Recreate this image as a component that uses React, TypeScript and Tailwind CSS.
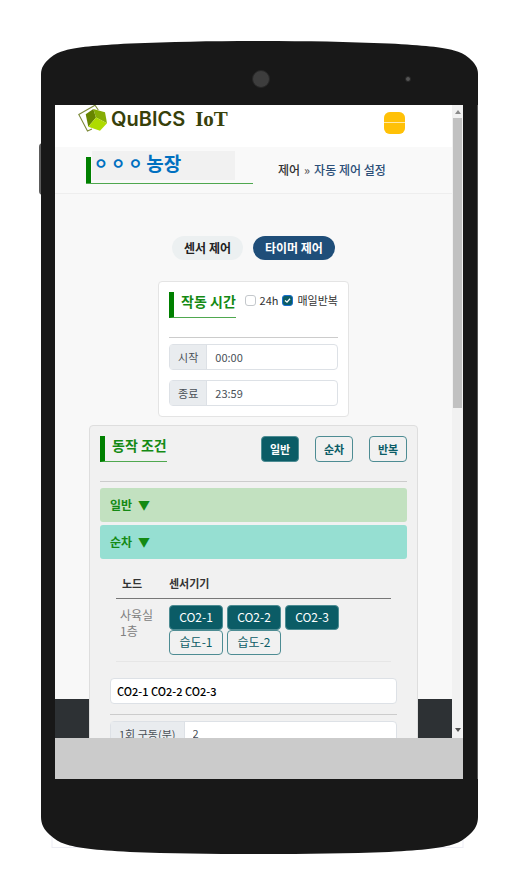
import React, { useState } from 'react';

const MODES = ['일반', '순차', '반복'];
const SENSORS = ['CO2-1', 'CO2-2', 'CO2-3', '습도-1', '습도-2'];

function PhoneTop() {
  return (
    <svg className="block h-16 w-full shrink-0" viewBox="0 0 437 64" preserveAspectRatio="none" aria-hidden="true">
      <path
        fill="#181818"
        d="M0 64V33C0 27 3 22 9 17C14 13 18 11 24 9.500C36 6 54 4.500 89 2.500C130 .8 170 0 218.500 0C267 0 307 .8 348 2.500C383 4.500 401 6 413 9.500C419 11 423 13 428 17C434 22 437 27 437 33V64Z"
      />
      <circle cx="220" cy="38" r="8.500" fill="#3d3d3d" stroke="#262626" />
      <circle cx="367" cy="38" r="2.500" fill="#555" stroke="#262626" />
    </svg>
  );
}

function PhoneBottom() {
  return (
    <svg className="block h-[75px] w-full shrink-0" viewBox="0 0 437 75" preserveAspectRatio="none" aria-hidden="true">
      <rect x="11" y="40" width="411" height="28.500" fill="none" stroke="#ededf5" />
      <path
        fill="#181818"
        d="M0 0V38C0 45 3 51 9 56C14 60.500 18 63 24 65C36 69 54 71 89 73C130 74.500 170 75 218.500 75C267 75 307 74.500 348 73C383 71 401 69 413 65C419 63 423 60.500 428 56C434 51 437 45 437 38V0Z"
      />
    </svg>
  );
}

function LogoMark() {
  return (
    <svg className="h-7 w-[30px] overflow-visible" viewBox="0 0 30 28" aria-hidden="true">
      <path d="M20.300 5L17 .2L.8 9.500L9.500 26L14 24" fill="none" stroke="#7d8a3a" strokeWidth="1.100" />
      <path d="M7.700 9.300L15.300 4L18 12.500L10.300 21.700Z" fill="#678500" />
      <path d="M15.300 4L27 7.300L29 18.300L18 12.500Z" fill="#86ad05" />
      <path d="M18 12.500L29 18.300L22 25.700L10.300 21.700Z" fill="#aedb00" />
    </svg>
  );
}

function Scrollbar() {
  return (
    <div className="flex w-[11px] shrink-0 flex-col items-center bg-[#f1f1f1]" aria-hidden="true">
      <div className="flex h-[13px] items-center">
        <svg className="h-1 w-1.5" viewBox="0 0 6 4">
          <path d="M0 4L3 0L6 4Z" fill="#8a8a8a" />
        </svg>
      </div>
      <div className="flex w-full flex-1 justify-center">
        <div className="h-[48%] w-[9px] bg-[#c1c1c1]" />
      </div>
      <div className="flex h-4 items-center">
        <svg className="h-1 w-1.5" viewBox="0 0 6 4">
          <path d="M0 0L3 4L6 0Z" fill="#505050" />
        </svg>
      </div>
    </div>
  );
}

function SectionTitle({ children }: { children: React.ReactNode }) {
  return (
    <h2 className="h-[26px] border-b border-l-[5px] border-b-[#4fa84f] border-l-[#008000] pl-[7px] text-sm leading-[18px] font-bold text-[#148a14]">
      {children}
    </h2>
  );
}

function InputGroup({ id, label, value }: { id: string; label: string; value: string }) {
  return (
    <div className="flex h-[26px] rounded-sm border border-[#dde1e6] bg-white text-[11px]">
      <label htmlFor={id} className="flex shrink-0 items-center border-r border-[#dde1e6] bg-[#e9ecef] px-2 leading-4 text-[#495057]">
        {label}
      </label>
      <input id={id} defaultValue={value} className="w-full min-w-0 px-2 text-[#495057] outline-none" />
    </div>
  );
}

export default function App() {
  const [tab, setTab] = useState('timer');
  const [mode, setMode] = useState('일반');
  const [allDay, setAllDay] = useState(false);
  const [daily, setDaily] = useState(true);
  const [selected, setSelected] = useState<string[]>(['CO2-1', 'CO2-2', 'CO2-3']);

  const toggleSensor = (name: string) => {
    setSelected((prev) => (prev.includes(name) ? prev.filter((s) => s !== name) : [...prev, name]));
  };

  const tabClass = (name: string) =>
    tab === name ? 'bg-[#1f4e79] text-white' : 'bg-[#ecf0f1] text-[#222]';

  const checkClass =
    'flex size-[11px] appearance-none items-center justify-center rounded-[3px] border border-[#c4c8cc] bg-white checked:border-[#1a6fd0] checked:bg-[#0b5c66]';

  return (
    <div className="flex h-screen flex-col bg-white px-10 pt-[41px] pb-[37px] font-['Noto_Sans_CJK_KR',sans-serif]">
      <div className="relative flex min-h-0 flex-1 flex-col pl-px">
        {/* 측면 버튼 */}
        <div className="absolute top-[102px] -left-px h-[52px] w-1 rounded-l-sm bg-[#5c5c5c]" />
        <PhoneTop />
        <div className="relative flex min-h-0 flex-1 flex-col border-r border-[#555] bg-[#181818] pr-3.5 pl-3.5">
          <div className="relative flex min-h-0 flex-1 overflow-hidden bg-[#f8f8f8]">
            {/* 푸터: 카드 뒤에 깔림 */}
            <footer className="absolute inset-x-0 bottom-0 h-[39px] bg-[#2d3134]" />

            <div className="relative min-w-0 flex-1">
              <header className="flex h-[42px] items-start justify-between bg-white pr-[47px] pl-[23px]">
                <a href="#" className="flex h-7 items-center text-[#37400a]">
                  <LogoMark />
                  <span className="ml-[3px] font-['Inter',sans-serif] text-xl leading-7 font-semibold">QuBICS</span>
                  <span className="ml-2.5 font-['Liberation_Serif',serif] text-[21px] leading-7 font-bold">IoT</span>
                </a>
                <button
                  type="button"
                  aria-label="메뉴"
                  className="mt-[7px] flex h-[22px] w-[21px] flex-col gap-px overflow-hidden rounded-md bg-[#ffe9a8]"
                >
                  <span className="h-2.5 w-full bg-[#ffc107]" />
                  <span className="w-full flex-1 bg-[#ffc107]" />
                </button>
              </header>

              <div className="flex h-[47px] items-center border-b border-[#eee] bg-[#f9f9f9] pl-[31px]">
                <div className="mb-1.5 h-[33px] w-[167px] border-b border-[#4fa84f]">
                  <div className="flex h-8 items-end">
                    <span className="h-[26px] w-[5px] bg-[#008000]" />
                    <h1 className="mb-[3px] ml-px flex h-[29px] w-[143px] gap-1 bg-[#f1f1f1] pl-0.5 leading-6 font-bold text-[#0070c0]">
                      <span className="text-[15px]">ㅇ ㅇ ㅇ</span>
                      <span className="text-[19px]">농장</span>
                    </h1>
                  </div>
                </div>
                <nav className="ml-[25px] flex gap-1 text-xs font-medium whitespace-nowrap">
                  <a href="#" className="text-[#333]">제어</a>
                  <span className="text-[#555]">»</span>
                  <a href="#" className="text-[#2c4f78]">자동 제어 설정</a>
                </nav>
              </div>

              <main className="flex flex-col items-center px-[34px] pt-[42px]">
                <div className="flex gap-2.5">
                  <button
                    type="button"
                    onClick={() => setTab('sensor')}
                    className={`h-6 rounded-full px-3 text-xs font-bold ${tabClass('sensor')}`}
                  >
                    센서 제어
                  </button>
                  <button
                    type="button"
                    onClick={() => setTab('timer')}
                    className={`h-6 rounded-full px-3 text-xs font-bold ${tabClass('timer')}`}
                  >
                    타이머 제어
                  </button>
                </div>

                <section className="mt-[21px] w-[58%] rounded-sm border border-[#e4e4e4] bg-white p-2.5">
                  <div className="flex justify-between">
                    <SectionTitle>작동 시간</SectionTitle>
                    <div className="flex h-4 items-center gap-1 text-[11px] whitespace-nowrap text-[#333]">
                      <input
                        id="all-day"
                        type="checkbox"
                        checked={allDay}
                        onChange={(e) => setAllDay(e.target.checked)}
                        className={checkClass}
                      />
                      <label htmlFor="all-day">24h</label>
                      <span className="grid place-items-center">
                        <input
                          id="daily"
                          type="checkbox"
                          checked={daily}
                          onChange={(e) => setDaily(e.target.checked)}
                          className={`col-start-1 row-start-1 ${checkClass}`}
                        />
                        {daily && (
                          <svg className="pointer-events-none col-start-1 row-start-1 h-[7px] w-[7px]" viewBox="0 0 7 7">
                            <path d="M1 3.500L3 5.200L6 1.800" fill="none" stroke="#fff" strokeWidth="1.300" />
                          </svg>
                        )}
                      </span>
                      <label htmlFor="daily">매일반복</label>
                    </div>
                  </div>
                  <hr className="mt-[19px] mb-1.5 border-[#ccc]" />
                  <div className="flex flex-col gap-2.5">
                    <InputGroup id="start" label="시작" value="00:00" />
                    <InputGroup id="end" label="종료" value="23:59" />
                  </div>
                </section>

                <section className="mt-2 w-full rounded-sm border border-[#dedede] bg-[#f1f1f1] p-2.5">
                  <div className="flex justify-between">
                    <SectionTitle>동작 조건</SectionTitle>
                    <div className="flex gap-4">
                      {MODES.map((m) => (
                        <button
                          key={m}
                          type="button"
                          onClick={() => setMode(m)}
                          className={`h-[26px] w-[38px] rounded-sm border border-[#4d8c93] text-[11px] font-bold ${
                            mode === m ? 'bg-[#0b5c66] text-white' : 'text-[#0b5c66]'
                          }`}
                        >
                          {m}
                        </button>
                      ))}
                    </div>
                  </div>
                  <hr className="mt-[19px] mb-1.5 border-[#ccc]" />
                  <button
                    type="button"
                    className="flex h-[34px] w-full items-center gap-1.5 rounded-[3px] bg-[#c2e1c0] px-2.5 text-xs font-bold text-[#148a14]"
                  >
                    일반 <span>▼</span>
                  </button>
                  <button
                    type="button"
                    className="mt-[3px] flex h-[34px] w-full items-center gap-1.5 rounded-[3px] bg-[#96dfd2] px-2.5 text-xs font-bold text-[#148a14]"
                  >
                    순차 <span>▼</span>
                  </button>

                  <div className="px-4 pt-2.5">
                    <table className="w-full table-fixed text-left">
                      <thead>
                        <tr className="h-[29px] border-b border-[#777] text-[11px] text-[#333]">
                          <th className="w-[53px] pl-1.5 font-bold">노드</th>
                          <th className="font-bold">센서기기</th>
                        </tr>
                      </thead>
                      <tbody>
                        <tr className="border-b border-[#e6e6e6] align-top">
                          <td className="py-2 pl-1 text-xs leading-4 text-[#808080]">
                            사육실
                            <br />
                            1층
                          </td>
                          <td className="pt-1.5 pb-1.5">
                            <div className="flex flex-wrap gap-x-1">
                              {SENSORS.map((s) => (
                                <button
                                  key={s}
                                  type="button"
                                  onClick={() => toggleSensor(s)}
                                  className={`h-[25px] w-[54px] rounded-sm border border-[#4d8c93] text-xs ${
                                    selected.includes(s) ? 'bg-[#0b5c66] text-white' : 'text-[#0b5c66]'
                                  }`}
                                >
                                  {s}
                                </button>
                              ))}
                            </div>
                          </td>
                        </tr>
                      </tbody>
                    </table>
                  </div>

                  <div className="px-2.5 pt-4">
                    <input
                      aria-label="선택된 센서"
                      readOnly
                      value={selected.join(' ')}
                      className="block h-[26px] w-full rounded-sm border border-[#dde1e6] bg-white px-1.5 text-[11px] font-medium text-black outline-none"
                    />
                    <hr className="mt-2.5 mb-1.5 border-[#ccc]" />
                    <InputGroup id="run-minutes" label="1회 구동(분)" value="2" />
                  </div>
                </section>
              </main>
            </div>

            <div className="relative flex">
              <Scrollbar />
            </div>
          </div>
          <div className="h-[41px] shrink-0 bg-[#cbcbcb]" />
        </div>
        <PhoneBottom />
      </div>
    </div>
  );
}
